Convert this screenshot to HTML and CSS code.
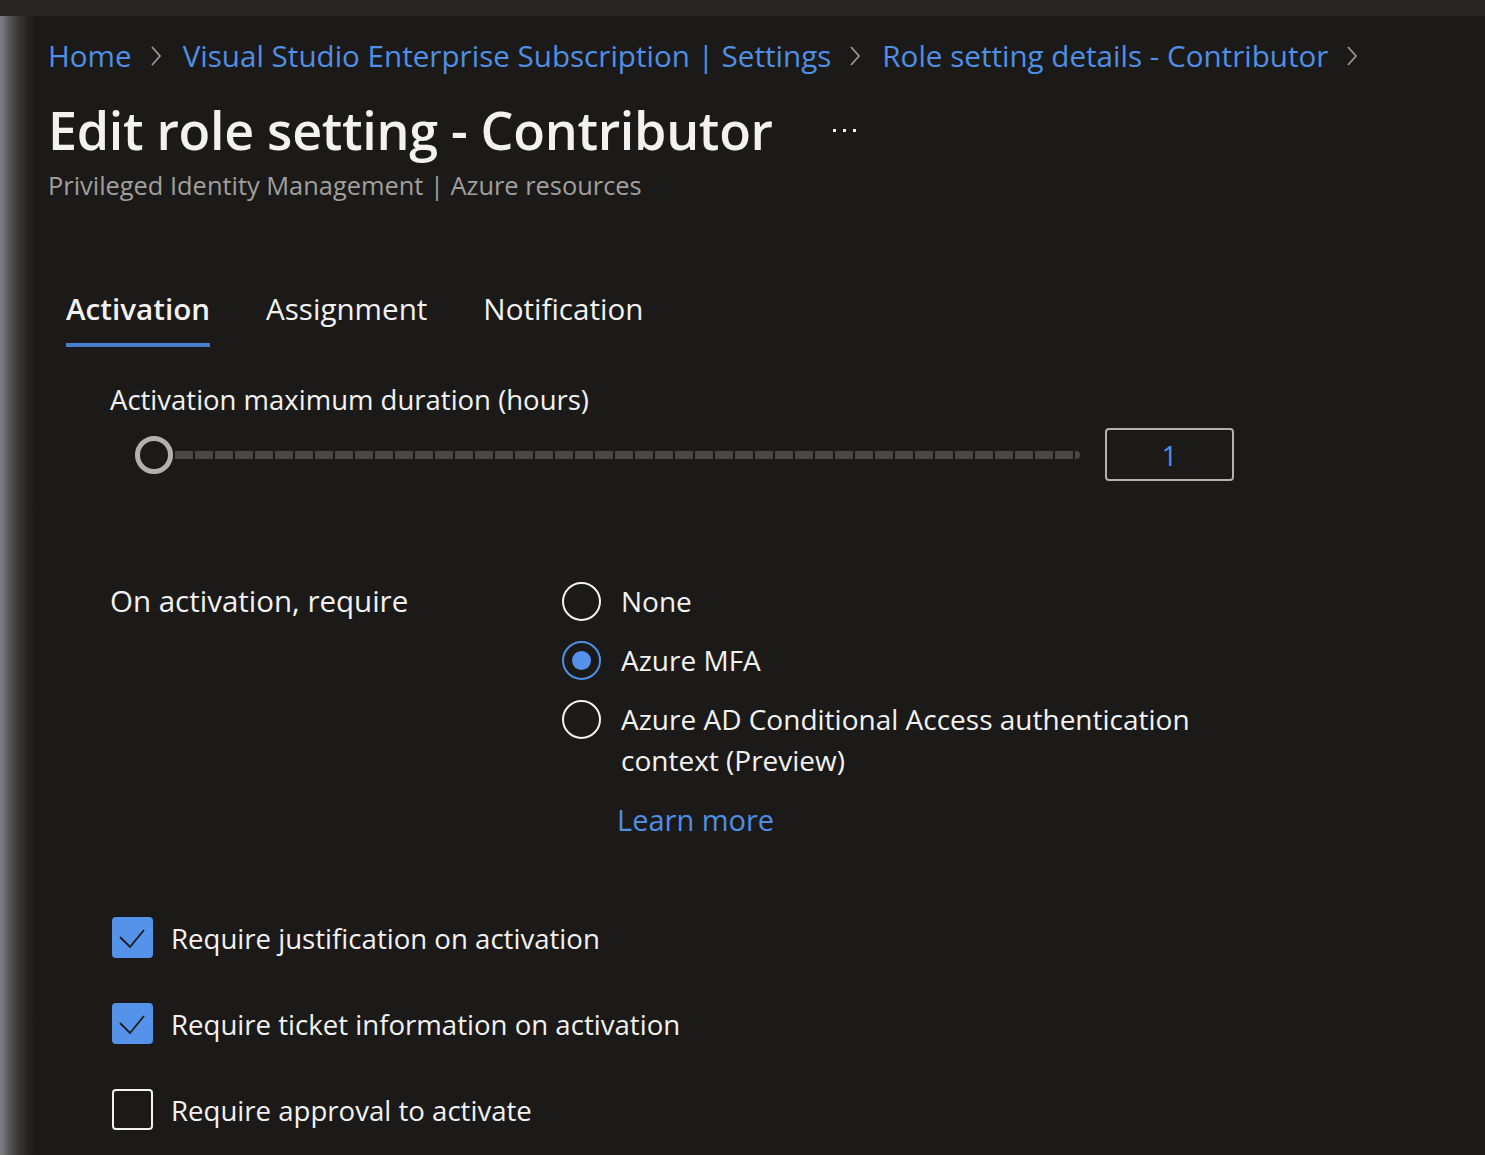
FILE: index.html
```html
<!DOCTYPE html>
<html lang="en">
<head>
<meta charset="utf-8">
<title>Edit role setting - Contributor</title>
<link rel="stylesheet" href="styles.css">
</head>
<body>
<div class="page">
  <div class="topbar"></div>
  <div class="content">
    <nav class="breadcrumb">
      <a class="crumb">Home</a>
      <svg class="chev" viewBox="0 0 12 24" width="12" height="24"><polyline points="2,3 10,12 2,21" fill="none" stroke="#a19f9d" stroke-width="1.6"/></svg>
      <a class="crumb">Visual Studio Enterprise Subscription | Settings</a>
      <svg class="chev" viewBox="0 0 12 24" width="12" height="24"><polyline points="2,3 10,12 2,21" fill="none" stroke="#a19f9d" stroke-width="1.6"/></svg>
      <a class="crumb">Role setting details - Contributor</a>
      <svg class="chev" viewBox="0 0 12 24" width="12" height="24"><polyline points="2,3 10,12 2,21" fill="none" stroke="#a19f9d" stroke-width="1.6"/></svg>
    </nav>
    <div class="title-row">
      <h1 class="title">Edit role setting - Contributor</h1>
      <span class="more"><i></i><i></i><i></i></span>
    </div>
    <div class="subtitle">Privileged Identity Management | Azure resources</div>

    <div class="tabs">
      <div class="tab active">Activation</div>
      <div class="tab">Assignment</div>
      <div class="tab">Notification</div>
    </div>

    <div class="panel">
      <div class="field-label">Activation maximum duration (hours)</div>
      <div class="slider-row">
        <div class="slider">
          <div class="track"></div>
          <div class="thumb"></div>
        </div>
        <div class="num-input">1</div>
      </div>

      <div class="require">
        <div class="require-label">On activation, require</div>
        <div class="options">
          <div class="radio-row">
            <span class="radio"></span>
            <span class="radio-text">None</span>
          </div>
          <div class="radio-row">
            <span class="radio checked"></span>
            <span class="radio-text">Azure MFA</span>
          </div>
          <div class="radio-row">
            <span class="radio"></span>
            <span class="radio-text">Azure AD Conditional Access authentication context (Preview)</span>
          </div>
          <a class="learn">Learn more</a>
        </div>
      </div>

      <div class="checks">
        <div class="check-row">
          <span class="box checked"><svg viewBox="0 0 41 41" width="41" height="41"><polyline points="8,20 18,30 32,13" fill="none" stroke="#1b1a19" stroke-width="1.8"/></svg></span>
          <span class="check-text">Require justification on activation</span>
        </div>
        <div class="check-row">
          <span class="box checked"><svg viewBox="0 0 41 41" width="41" height="41"><polyline points="8,20 18,30 32,13" fill="none" stroke="#1b1a19" stroke-width="1.8"/></svg></span>
          <span class="check-text">Require ticket information on activation</span>
        </div>
        <div class="check-row">
          <span class="box"></span>
          <span class="check-text">Require approval to activate</span>
        </div>
      </div>
    </div>
  </div>
</div>
</body>
</html>
```
FILE: styles.css
```css
* { box-sizing: border-box; }
html, body {
  margin: 0;
  padding: 0;
  background: #1b1a19;
}
body {
  font-family: "Open Sans", "Noto Sans", sans-serif;
  color: #f3f2f1;
}
.page {
  width: 1485px;
  height: 1155px;
  overflow: hidden;
  background: linear-gradient(to right, #7c7c82 0, #76767b 3px, #58585a 9px, #3a3a3a 18px, #262524 27px, #1b1a19 36px);
}
.topbar {
  height: 16px;
  background: #272625;
}
.content {
  padding-left: 48px;
}
.breadcrumb {
  display: flex;
  align-items: center;
  height: 40px;
  margin-top: 20px;
  font-size: 29.6px;
  line-height: 40px;
}
.crumb {
  color: #4f8fe6;
  white-space: nowrap;
}
.chev {
  margin: 0 21px 0 18px;
  flex: none;
}
.title-row {
  display: flex;
  align-items: center;
  margin-top: 24px;
  height: 60px;
}
.title {
  margin: 0;
  font-size: 52px;
  line-height: 60px;
  font-weight: 600;
  color: #f3f2f1;
  letter-spacing: -0.3px;
}
.more {
  display: flex;
  gap: 7px;
  margin-left: 60px;
}
.more i {
  width: 3px;
  height: 3px;
  background: #f3f2f1;
  display: block;
}
.subtitle {
  margin-top: 7px;
  font-size: 25.4px;
  line-height: 36px;
  color: #a19f9d;
}
.tabs {
  display: flex;
  gap: 56px;
  margin-top: 86px;
  padding-left: 18px;
}
.tab {
  font-size: 29.6px;
  line-height: 40px;
  padding-bottom: 14px;
  border-bottom: 4px solid transparent;
  color: #f3f2f1;
}
.tab.active {
  font-weight: 600;
  border-bottom-color: #4a7fd0;
}
.panel {
  padding-left: 62px;
}
.field-label {
  margin-top: 34px;
  font-size: 27.5px;
  line-height: 38px;
}
.slider-row {
  display: flex;
  align-items: center;
  margin-top: 9px;
  padding-left: 25px;
  height: 53px;
}
.slider {
  position: relative;
  width: 945px;
  height: 38px;
}
.track {
  position: absolute;
  left: 0;
  right: 0;
  top: 15px;
  height: 8px;
  border-radius: 4px;
  background: repeating-linear-gradient(to right, #4a4846 0, #4a4846 18px, #1b1a19 18px, #1b1a19 20px);
}
.thumb {
  position: absolute;
  left: 0;
  top: 0;
  width: 38px;
  height: 38px;
  border-radius: 50%;
  border: 5px solid #b3b1af;
  background: #1b1a19;
}
.num-input {
  margin-left: 25px;
  width: 129px;
  height: 53px;
  border: 2px solid #b3b0ad;
  border-radius: 4px;
  color: #4f8fe6;
  font-size: 28px;
  display: flex;
  align-items: center;
  justify-content: center;
}
.require {
  display: flex;
  margin-top: 100px;
}
.require-label {
  width: 452px;
  font-size: 29.5px;
  line-height: 40px;
}
.options {
  display: flex;
  flex-direction: column;
}
.radio-row {
  display: flex;
  align-items: flex-start;
  gap: 20px;
  margin-bottom: 18px;
}
.radio {
  flex: none;
  width: 39px;
  height: 39px;
  border-radius: 50%;
  border: 2px solid #f3f2f1;
  margin-top: 1px;
  display: flex;
  align-items: center;
  justify-content: center;
}
.radio.checked {
  border: 2.5px solid #4f8fe6;
}
.radio.checked::after {
  content: "";
  width: 19px;
  height: 19px;
  border-radius: 50%;
  background: #5592ea;
}
.radio-text {
  font-size: 28px;
  line-height: 41px;
  max-width: 600px;
}
.learn {
  color: #4f8fe6;
  font-size: 29px;
  line-height: 42px;
  margin-left: 55px;
}
.checks {
  margin-top: 76px;
  display: flex;
  flex-direction: column;
  gap: 45px;
}
.check-row {
  display: flex;
  align-items: center;
  gap: 18px;
  padding-left: 2px;
}
.box {
  flex: none;
  width: 41px;
  height: 41px;
  border-radius: 4px;
  border: 2px solid #f3f2f1;
  display: block;
}
.box.checked {
  border: none;
  background: #5592ea;
}
.box svg { display: block; }
.check-text {
  font-size: 27.6px;
  line-height: 40px;
}
```
